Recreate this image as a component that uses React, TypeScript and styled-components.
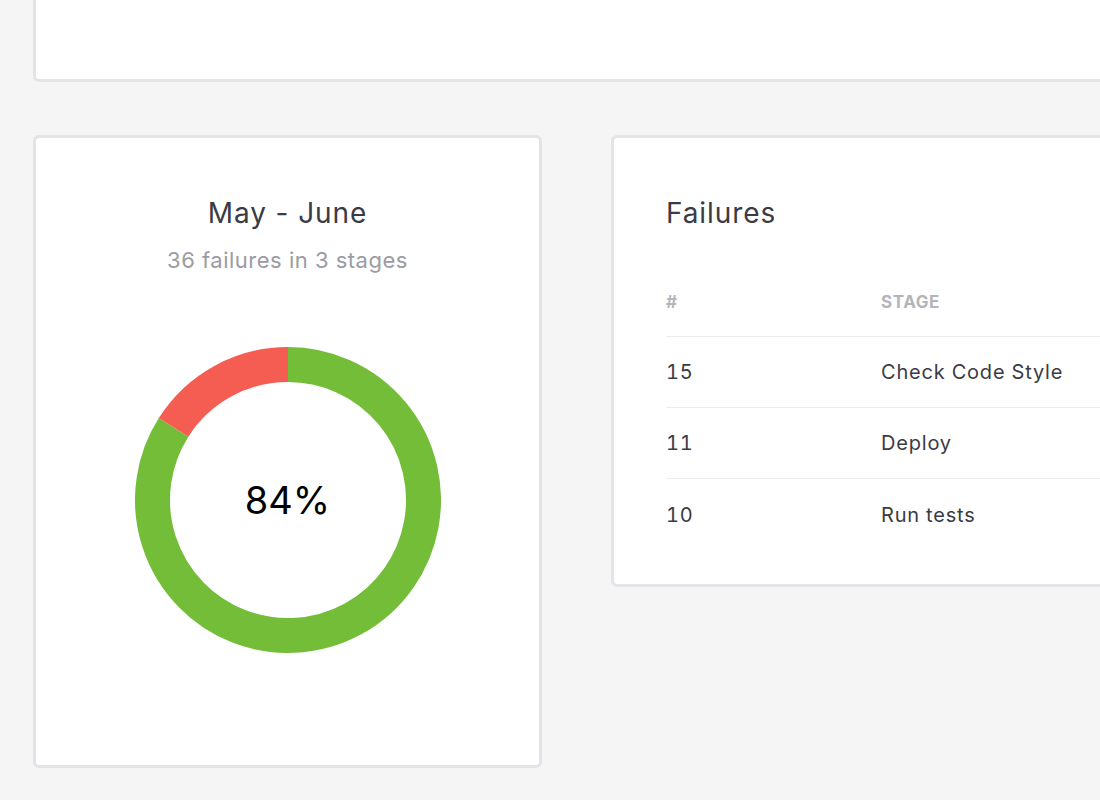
import React from "react";
import styled, { createGlobalStyle } from "styled-components";

const GlobalStyle = createGlobalStyle`
  html, body {
    margin: 0;
    padding: 0;
    background: #f5f5f5;
    overflow: hidden;
  }
  body {
    font-family: Inter, "Open Sans", "Liberation Sans", sans-serif;
    color: #3e3e48;
  }
`;

const Page = styled.div`
  width: 1200px;
  padding: 0 0 0 33px;
  display: grid;
  grid-template-columns: 509px 509px;
  column-gap: 69px;
  row-gap: 53px;
  align-items: start;
`;

const Card = styled.div`
  background: #ffffff;
  border: 3px solid #e3e3e8;
  border-radius: 6px;
  box-sizing: border-box;
`;

const TopCard = styled(Card)`
  grid-column: 1 / span 2;
  height: 122px;
  margin-top: -40px;
`;

const ChartCard = styled(Card)`
  height: 633px;
  padding-top: 57px;
  display: flex;
  flex-direction: column;
  align-items: center;
`;

const TableCard = styled(Card)`
  padding: 57px 0 34px 52px;
`;

const Title = styled.h2`
  margin: 0;
  font-size: 28px;
  line-height: 36px;
  font-weight: 400;
  letter-spacing: 0.9px;
  color: #3b3b45;
`;

const Subtitle = styled.div`
  margin-top: 15px;
  font-size: 22px;
  line-height: 28px;
  letter-spacing: 0.5px;
  color: #9b9ba3;
`;

const DonutWrap = styled.div`
  position: relative;
  margin-top: 73px;
  width: 306px;
  height: 306px;
`;

const DonutLabel = styled.div`
  position: absolute;
  inset: 0;
  display: flex;
  align-items: center;
  justify-content: center;
  font-size: 38px;
  color: #000;
  font-weight: 400;
`;

const Table = styled.div`
  margin-top: 36px;
  display: flex;
  flex-direction: column;
`;

const Row = styled.div<{ $head?: boolean; $last?: boolean }>`
  display: grid;
  grid-template-columns: 215px 1fr;
  align-items: center;
  height: ${(p) => (p.$head ? "70px" : "71px")};
  border-bottom: ${(p) => (p.$last ? "none" : "1px solid #ececef")};
  box-sizing: border-box;
`;

const HeadCell = styled.div`
  font-size: 17px;
  font-weight: 700;
  color: #b4b4bb;
  text-transform: uppercase;
  letter-spacing: 0.6px;
`;

const Cell = styled.div`
  font-size: 20px;
  color: #3b3b45;
  letter-spacing: 0.8px;
  font-variant-numeric: tabular-nums;
`;

function arcPath(cx: number, cy: number, r: number, a0: number, a1: number) {
  const p = (a: number) => {
    const rad = ((a - 90) * Math.PI) / 180;
    return [cx + r * Math.cos(rad), cy + r * Math.sin(rad)];
  };
  const [x0, y0] = p(a0);
  const [x1, y1] = p(a1);
  const large = a1 - a0 > 180 ? 1 : 0;
  return `M ${x0} ${y0} A ${r} ${r} 0 ${large} 1 ${x1} ${y1}`;
}

const Donut: React.FC<{ pct: number }> = ({ pct }) => {
  const c = 153;
  const r = 135.5;
  const greenEnd = 360 * (pct / 100);
  return (
    <svg width="306" height="306" viewBox="0 0 306 306">
      <path d={arcPath(c, c, r, 0, greenEnd)} fill="none" stroke="#73bd38" strokeWidth="35" />
      <path d={arcPath(c, c, r, greenEnd, 360)} fill="none" stroke="#f55d53" strokeWidth="35" />
    </svg>
  );
};

const rows = [
  { n: "15", stage: "Check Code Style" },
  { n: "11", stage: "Deploy" },
  { n: "10", stage: "Run tests" },
];

export default function App() {
  return (
    <>
      <GlobalStyle />
      <Page>
        <TopCard />
        <ChartCard>
          <Title>May - June</Title>
          <Subtitle>36 failures in 3 stages</Subtitle>
          <DonutWrap>
            <Donut pct={84} />
            <DonutLabel>84%</DonutLabel>
          </DonutWrap>
        </ChartCard>
        <TableCard>
          <Title>Failures</Title>
          <Table>
            <Row $head>
              <HeadCell>#</HeadCell>
              <HeadCell>Stage</HeadCell>
            </Row>
            {rows.map((r, i) => (
              <Row key={r.n} $last={i === rows.length - 1}>
                <Cell>{r.n}</Cell>
                <Cell>{r.stage}</Cell>
              </Row>
            ))}
          </Table>
        </TableCard>
      </Page>
    </>
  );
}
